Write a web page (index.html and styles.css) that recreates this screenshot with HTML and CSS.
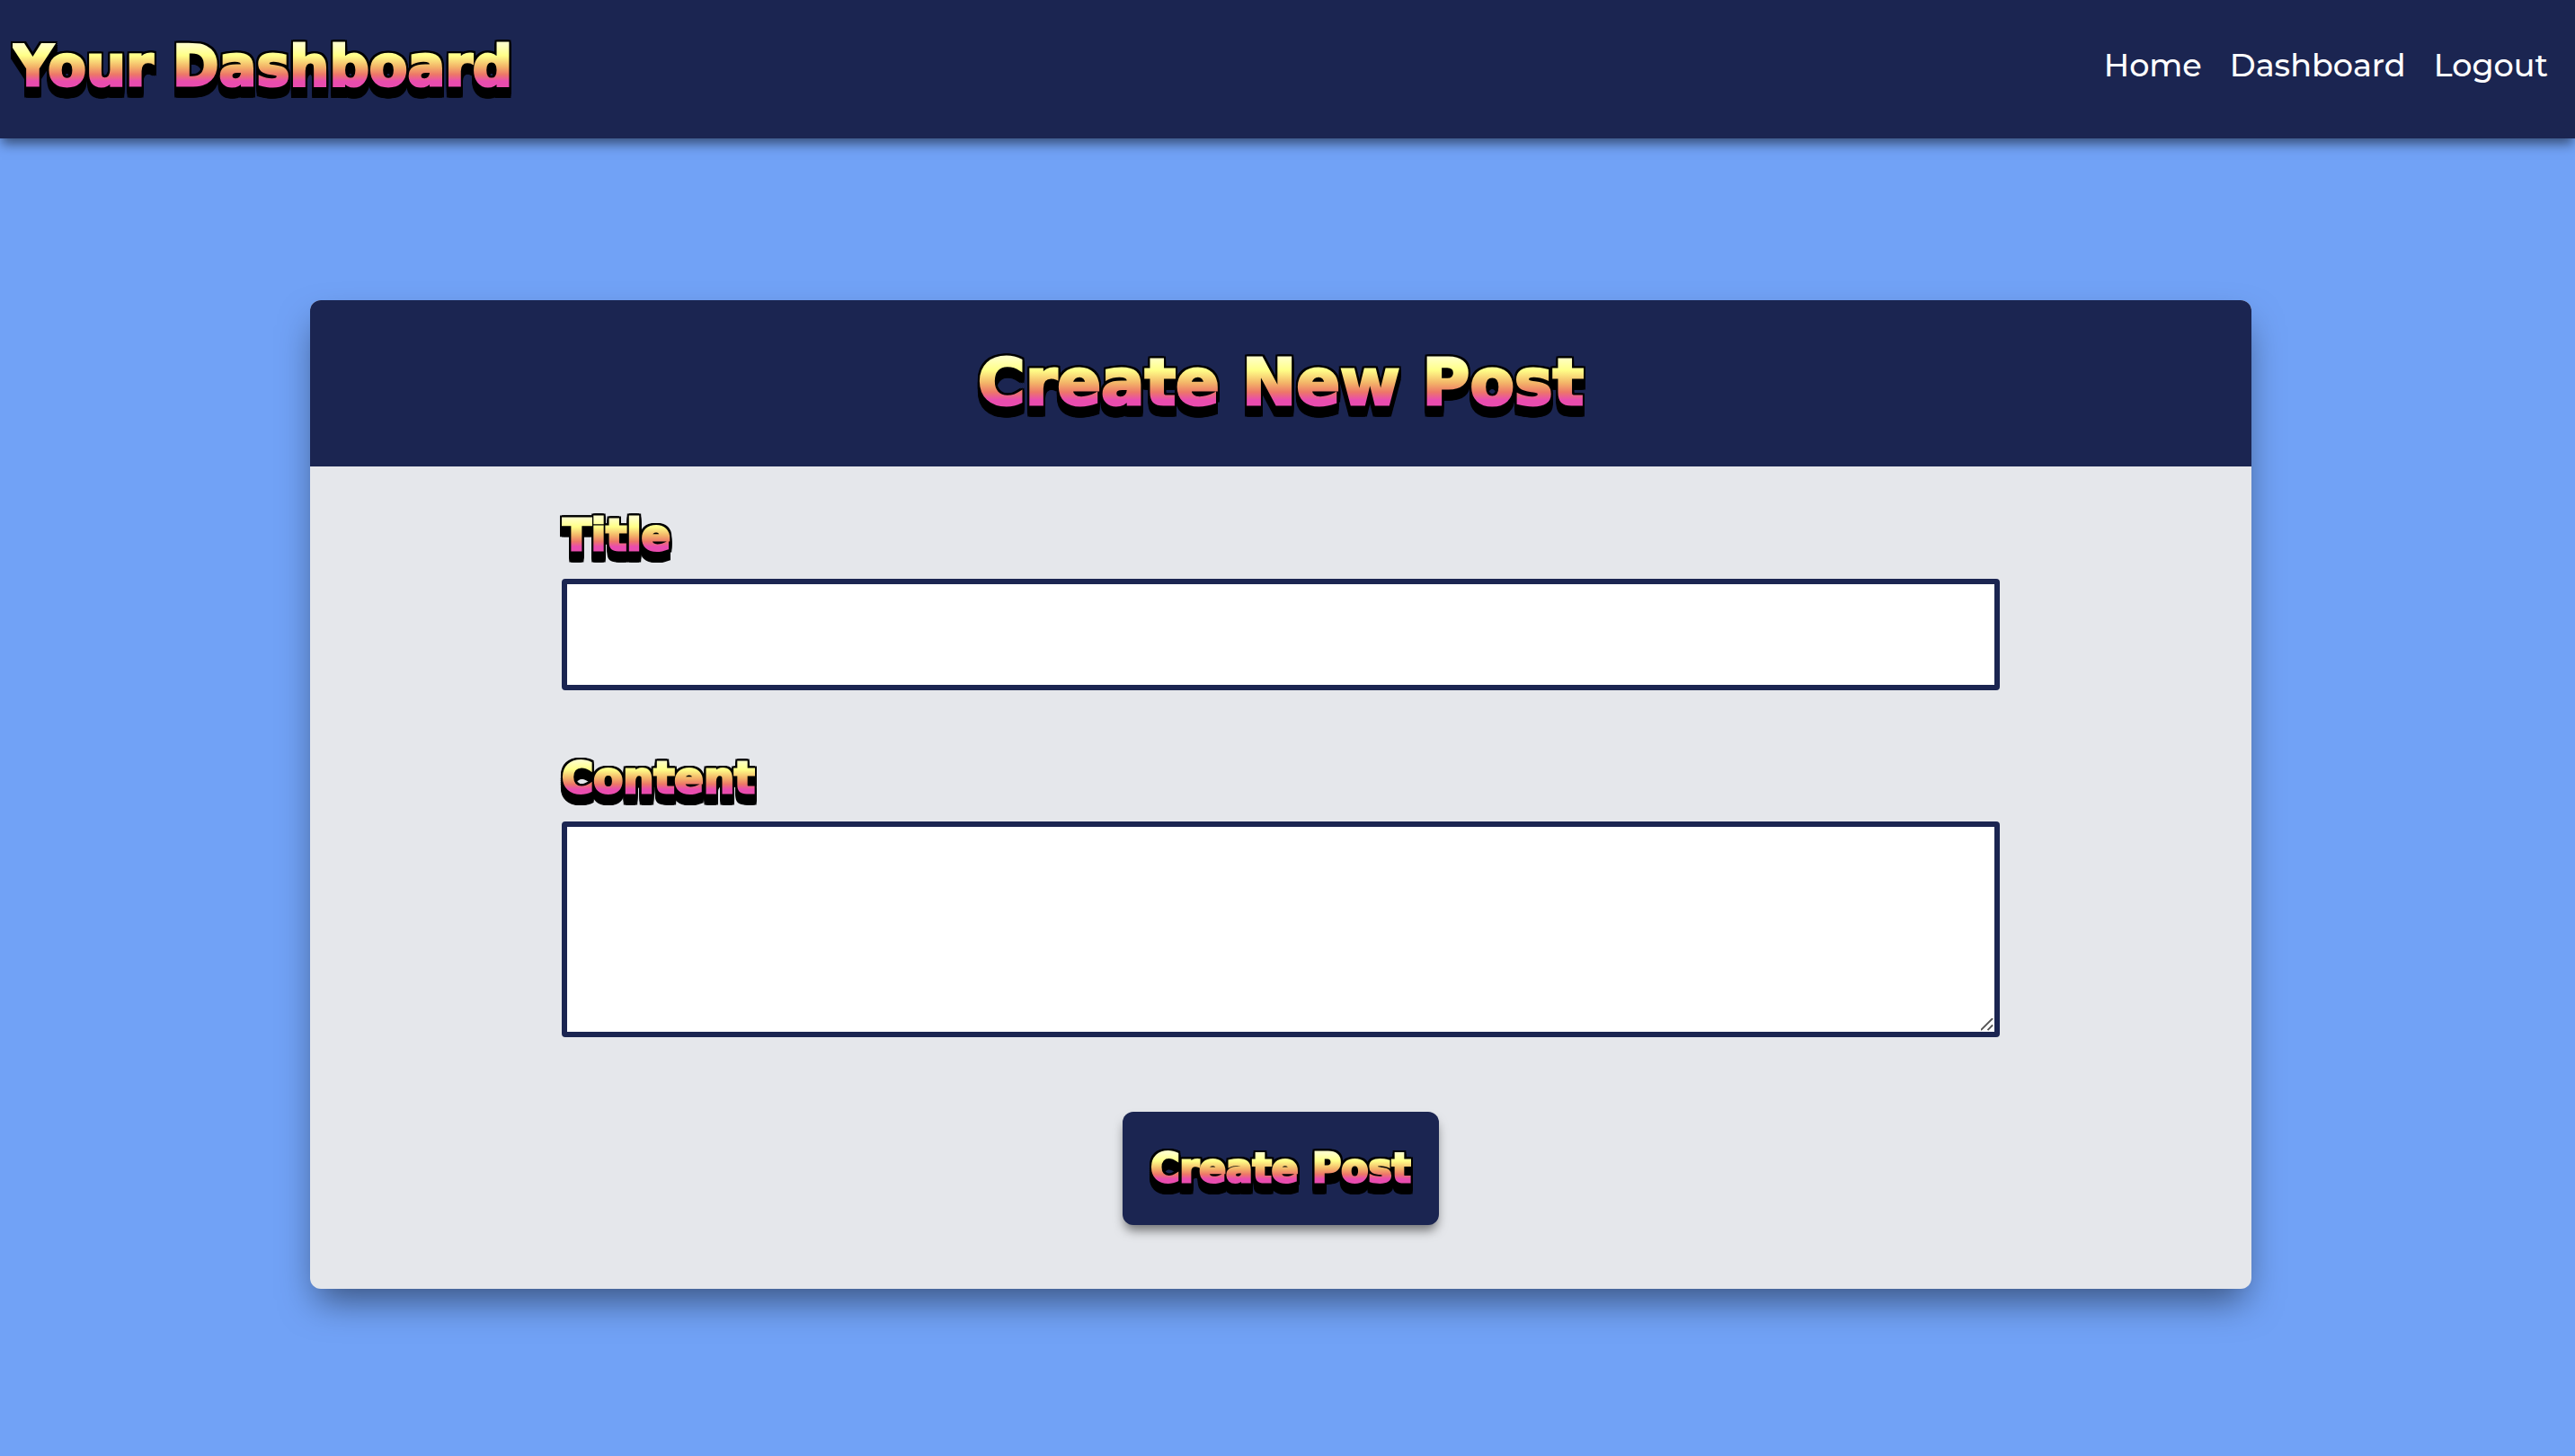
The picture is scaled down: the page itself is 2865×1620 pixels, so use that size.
FILE: index.html
```html
<!DOCTYPE html>
<html lang="en">
<head>
  <meta charset="utf-8">
  <meta name="viewport" content="width=device-width, initial-scale=1">
  <title>Your Dashboard</title>
  <link rel="stylesheet" href="styles.css">
</head>
<body>
  <header class="site-header">
    <h1 class="site-title"><span class="arcade">Your Dashboard</span></h1>
    <nav class="site-nav">
      <a href="#home">Home</a>
      <a href="#dashboard">Dashboard</a>
      <a href="#logout">Logout</a>
    </nav>
  </header>
  <main class="page">
    <section class="card">
      <h2 class="card-title"><span class="arcade">Create New Post</span></h2>
      <form class="post-form">
        <div class="field">
          <label for="post-title"><span class="arcade">Title</span></label>
          <input id="post-title" type="text">
        </div>
        <div class="field">
          <label for="post-content"><span class="arcade">Content</span></label>
          <textarea id="post-content"></textarea>
        </div>
        <button class="submit" type="button"><span class="arcade">Create Post</span></button>
      </form>
    </section>
  </main>
</body>
</html>
```
FILE: styles.css
```css
:root {
  --navy: #1b2551;
  --sky: #71a2f6;
  --panel: #e5e7eb;
}

* {
  box-sizing: border-box;
}

body {
  margin: 0;
  min-height: 100vh;
  background: var(--sky);
  font-family: Montserrat, Inter, sans-serif;
}

h1,
h2 {
  margin: 0;
}

/* Sunset lettering with a black outline and a block shadow below */
.arcade {
  font-family: "DejaVu Sans", sans-serif;
  font-weight: 700;
  color: transparent;
  -webkit-text-stroke: 3px transparent;
  background: linear-gradient(
    #ffffc8 0.2em,
    #ffff88 0.4em,
    #f3b468 0.6em,
    #ed7768 0.74em,
    #e94cae 0.86em
  );
  -webkit-background-clip: text;
  background-clip: text;
  filter:
    drop-shadow(2px 0 0 #000)
    drop-shadow(-2px 0 0 #000)
    drop-shadow(0 -2px 0 #000)
    drop-shadow(0 4px 0 #000)
    drop-shadow(0 4px 0 #000)
    drop-shadow(0 4px 0 #000);
}

.site-header {
  position: relative;
  display: flex;
  justify-content: space-between;
  align-items: center;
  height: 154px;
  padding: 0 30px 8px 14px;
  background: var(--navy);
  box-shadow: 0 8px 12px -2px rgb(0 0 0 / 50%);
}

.site-title {
  font-size: 62px;
  line-height: 72px;
}

.site-nav {
  display: flex;
  gap: 31px;
}

.site-nav a {
  color: #fff;
  font-size: 35px;
  font-weight: 500;
  line-height: 48px;
  text-decoration: none;
}

.page {
  padding: 180px 15px 180px 0;
}

.card {
  width: 90%;
  max-width: 2160px;
  margin: 0 auto;
  overflow: hidden;
  border-radius: 12px;
  background: var(--panel);
  box-shadow: 0 20px 40px -8px rgb(0 0 0 / 50%);
}

.card-title {
  padding: 48px 0 52px;
  background: var(--navy);
  font-size: 72px;
  line-height: 84px;
  text-align: center;
}

.post-form {
  display: flex;
  flex-direction: column;
  align-items: center;
  max-width: 1600px;
  margin: 0 auto;
  padding: 48px 0 71px;
}

.field {
  display: flex;
  flex-direction: column;
  gap: 21px;
  width: 100%;
  margin-bottom: 69px;
}

.field label {
  font-size: 48px;
  line-height: 56px;
}

.field input,
.field textarea {
  width: 100%;
  height: 124px;
  padding: 16px;
  border: 6px solid var(--navy);
  border-radius: 4px;
  outline: 0;
  background: #fff;
  font: inherit;
  font-size: 32px;
}

.field textarea {
  height: 240px;
  resize: vertical;
}

.field textarea::-webkit-resizer {
  background: url("data:image/svg+xml,%3Csvg xmlns='http://www.w3.org/2000/svg' viewBox='0 0 16 16'%3E%3Cpath d='M0 14L14 0M8 14L14 8' stroke='%23555' stroke-width='2'/%3E%3C/svg%3E") 0 0 / 100% 100% no-repeat;
}

.submit {
  height: 126px;
  margin-top: 14px;
  padding: 0 31px;
  border: 0;
  border-radius: 12px;
  background: var(--navy);
  box-shadow: 0 8px 12px -2px rgb(0 0 0 / 50%);
  font-size: 44px;
  line-height: 52px;
  cursor: pointer;
}
```
